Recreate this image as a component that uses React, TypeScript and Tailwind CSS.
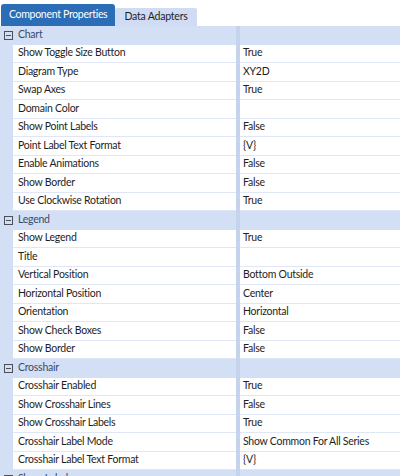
type Row = [string, string]

const groups: { title: string; rows: Row[] }[] = [
  {
    title: 'Chart',
    rows: [
      ['Show Toggle Size Button', 'True'],
      ['Diagram Type', 'XY2D'],
      ['Swap Axes', 'True'],
      ['Domain Color', ''],
      ['Show Point Labels', 'False'],
      ['Point Label Text Format', '{V}'],
      ['Enable Animations', 'False'],
      ['Show Border', 'False'],
      ['Use Clockwise Rotation', 'True'],
    ],
  },
  {
    title: 'Legend',
    rows: [
      ['Show Legend', 'True'],
      ['Title', ''],
      ['Vertical Position', 'Bottom Outside'],
      ['Horizontal Position', 'Center'],
      ['Orientation', 'Horizontal'],
      ['Show Check Boxes', 'False'],
      ['Show Border', 'False'],
    ],
  },
  {
    title: 'Crosshair',
    rows: [
      ['Crosshair Enabled', 'True'],
      ['Show Crosshair Lines', 'False'],
      ['Show Crosshair Labels', 'True'],
      ['Crosshair Label Mode', 'Show Common For All Series'],
      ['Crosshair Label Text Format', '{V}'],
    ],
  },
  {
    title: 'Show Labels',
    rows: [],
  },
]

function CollapseIcon() {
  return (
    <svg width="9" height="9" viewBox="0 0 9 9" className="shrink-0">
      <rect x="0.5" y="0.5" width="8" height="8" fill="none" stroke="#4b4f58" strokeWidth="1" />
      <line x1="2" y1="4.5" x2="7" y2="4.5" stroke="#4b4f58" strokeWidth="1" />
    </svg>
  )
}

export default function App() {
  return (
    <div
      className="w-[400px] h-[476px] overflow-hidden bg-white text-[10.5px] tracking-[-0.25px] text-[#1e1e1e]"
      style={{ fontFamily: 'Lato, "Noto Sans", sans-serif' }}
    >
      {/* Tabs */}
      <div className="flex items-end h-[26px] pl-[1px]">
        <div className="h-[22px] pl-[8px] pr-[8px] flex items-center bg-[#2b6db7] text-white rounded-t-[3px] text-[10.5px] tracking-[-0.3px]">
          Component Properties
        </div>
        <div className="h-[18px] px-[9px] flex items-center bg-[#cfdcf3] text-[#1e1e1e] rounded-t-[2px] text-[10.5px] tracking-[-0.2px]">
          Data Adapters
        </div>
      </div>

      {/* Property grid */}
      <div className="flex flex-col">
        {groups.map((g) => (
          <div key={g.title} className="flex flex-col">
            <div className="flex h-[18.5px] bg-[#d3dff4]">
              <div className="w-[236px] flex items-center gap-[5px] pl-[4px] text-[#3b4a68]">
                <CollapseIcon />
                <span>{g.title}</span>
              </div>
              <div className="w-[4px] bg-[#c5d3ec]" />
              <div className="flex-1" />
            </div>
            {g.rows.map(([name, value], i) => (
              <div key={name + i} className="flex h-[18.5px]">
                <div className="w-[13px] bg-[#d3dff4]" />
                <div className="w-[223px] flex items-center pl-[5px] bg-white border-b border-[#dfe7f6] whitespace-nowrap overflow-hidden">
                  {name}
                </div>
                <div className="w-[4px] bg-[#c5d3ec]" />
                <div className="flex-1 flex items-center pl-[3px] bg-white border-b border-[#dfe7f6] whitespace-nowrap overflow-hidden">
                  {value}
                </div>
              </div>
            ))}
          </div>
        ))}
      </div>
    </div>
  )
}
